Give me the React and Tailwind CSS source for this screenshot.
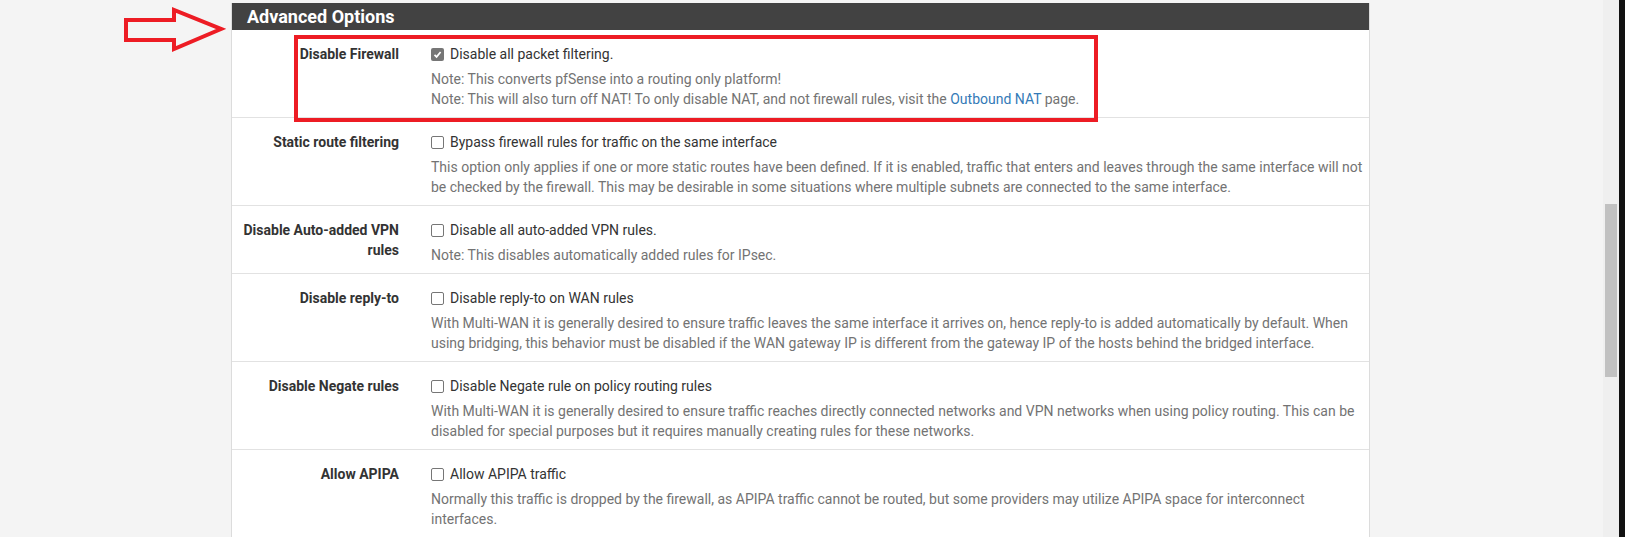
import React from "react";

const rows = [
  {
    label: "Disable Firewall",
    checked: true,
    text: "Disable all packet filtering.",
    notes: [
      "Note: This converts pfSense into a routing only platform!",
      <>
        Note: This will also turn off NAT! To only disable NAT, and not firewall rules, visit the{" "}
        <a className="text-[#337ab7]">Outbound NAT</a> page.
      </>,
    ],
  },
  {
    label: "Static route filtering",
    text: "Bypass firewall rules for traffic on the same interface",
    notes: [
      "This option only applies if one or more static routes have been defined. If it is enabled, traffic that enters and leaves through the same interface will not be checked by the firewall. This may be desirable in some situations where multiple subnets are connected to the same interface.",
    ],
  },
  {
    label: "Disable Auto-added VPN rules",
    text: "Disable all auto-added VPN rules.",
    notes: ["Note: This disables automatically added rules for IPsec."],
  },
  {
    label: "Disable reply-to",
    text: "Disable reply-to on WAN rules",
    notes: [
      "With Multi-WAN it is generally desired to ensure traffic leaves the same interface it arrives on, hence reply-to is added automatically by default. When using bridging, this behavior must be disabled if the WAN gateway IP is different from the gateway IP of the hosts behind the bridged interface.",
    ],
  },
  {
    label: "Disable Negate rules",
    text: "Disable Negate rule on policy routing rules",
    notes: [
      "With Multi-WAN it is generally desired to ensure traffic reaches directly connected networks and VPN networks when using policy routing. This can be disabled for special purposes but it requires manually creating rules for these networks.",
    ],
  },
  {
    label: "Allow APIPA",
    text: "Allow APIPA traffic",
    notes: [
      "Normally this traffic is dropped by the firewall, as APIPA traffic cannot be routed, but some providers may utilize APIPA space for interconnect interfaces.",
    ],
  },
];

// checkbox drawn like the Chrome default one
const Checkbox = ({ checked }) =>
  checked ? (
    <span className="flex h-[13px] w-[13px] shrink-0 items-center justify-center rounded-[2px] bg-[#767676]">
      <svg width="9" height="9" viewBox="0 0 9 9">
        <path d="M1.5 4.8 L3.6 6.9 L7.6 2" fill="none" stroke="#fff" strokeWidth="1.7" />
      </svg>
    </span>
  ) : (
    <span className="h-[13px] w-[13px] shrink-0 rounded-[2px] border border-[#767676] bg-white" />
  );

const OptionRow = ({ row }) => (
  <div className="flex border-b border-[#e2e2e2] pt-[14px] pb-[8px]">
    <div className="w-[167px] text-right text-[14px] leading-[20px] font-bold text-[#333]">
      {row.label}
    </div>
    <div className="ml-[32px] w-[935px]">
      <div className="flex h-[20px] items-center gap-[6px] text-[14px] text-[#333]">
        <Checkbox checked={row.checked} />
        <span>{row.text}</span>
      </div>
      <div className="mt-[5px] text-[14px] leading-[20px] text-[#737373]">
        {row.notes.map((n, i) => (
          <div key={i}>{n}</div>
        ))}
      </div>
    </div>
  </div>
);

export default function App() {
  return (
    <div
      className="flex h-[537px] overflow-hidden bg-[#f4f4f4]"
      style={{ fontFamily: "Roboto, 'Liberation Sans', sans-serif" }}
    >
      {/* annotation arrow */}
      <div className="w-[231px] shrink-0 pl-[122px] pt-[6px]">
        <svg width="104" height="48" viewBox="0 0 104 48">
          <polygon
            points="4,14 52,14 52,4 99,23 52,43 52,34 4,34"
            fill="none"
            stroke="#ed1c24"
            strokeWidth="4"
          />
        </svg>
      </div>

      <div className="relative mt-[3px] w-[1139px] shrink-0 self-start border-x border-[#dcdcdc] bg-white">
        <div className="flex h-[27px] items-center bg-[#424242] pl-[15px] text-[18px] font-bold text-white">
          Advanced Options
        </div>
        {rows.map((r, i) => (
          <OptionRow key={i} row={r} />
        ))}
        <div className="absolute left-[62px] top-[32px] h-[87px] w-[804px] border-4 border-[#ed1c24]" />
      </div>

      <div className="flex-1" />
      {/* scrollbar */}
      <div className="w-[16px] shrink-0 bg-[#efefef] px-[2px] pt-[204px]">
        <div className="h-[173px] bg-[#c1c1c1]" />
      </div>
      <div className="w-[6px] shrink-0 bg-[#111]" />
    </div>
  );
}
